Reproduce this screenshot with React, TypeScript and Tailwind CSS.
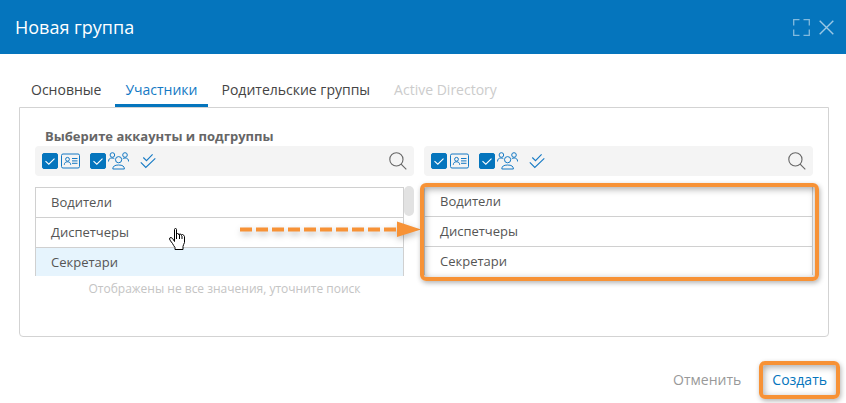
import React, { useState } from "react";

const groups = ["Водители", "Диспетчеры", "Секретари"];

function CheckBox({ label }: { label: string }) {
  const [on, setOn] = useState(true);
  return (
    <span className="relative block h-4 w-4">
      <input
        type="checkbox"
        aria-label={label}
        checked={on}
        onChange={() => setOn(!on)}
        className="block h-4 w-4 appearance-none rounded-xs border border-[#0575bd] bg-white checked:bg-[#0575bd]"
      />
      {on && (
        <svg className="pointer-events-none absolute inset-0" width="16" height="16" viewBox="0 0 16 16" fill="none" stroke="#fff" strokeWidth="1.1">
          <path d="M3.5 8.2 6.8 11.2 12.5 5.6" />
        </svg>
      )}
    </span>
  );
}

function CardIcon() {
  return (
    <svg width="19" height="16" viewBox="0 0 19 16" fill="none" stroke="#1479c4">
      <rect x="0.5" y="1" width="18" height="14" rx="1.5" />
      <circle cx="6.5" cy="6.3" r="1.9" />
      <path d="M3.3 11.8c0-2 1.3-3 3.2-3s3.2 1 3.2 3M11 5.5h5.5M11 7.9h5.5M11 10.3h5.5" />
    </svg>
  );
}

function PeopleIcon() {
  return (
    <svg width="21" height="18" viewBox="0 0 21 18" fill="none" stroke="#1479c4">
      <circle cx="4.4" cy="3" r="2.3" />
      <circle cx="17" cy="3" r="2.3" />
      <circle cx="10.6" cy="7.7" r="3.1" />
      <path d="M.5 9.5c0-2.4 1.3-3.5 3.4-3.5 1 0 1.8.2 2.4.7M20.6 9.5c0-2.4-1.4-3.5-3.4-3.5-1 0-1.8.2-2.4.7" />
      <path d="M4.8 17c0-2.8 2-4 5.8-4s5.800 1.200 5.800 4z" />
    </svg>
  );
}

function DoubleCheckIcon() {
  return (
    <svg width="16" height="16" viewBox="0 0 16 16" fill="none" stroke="#1479c4" strokeWidth="1.1">
      <path d="M3.3 4.5 6.5 7.6 12.6 1.3M.8 9.3 5.8 14.4 15.3 5.3" />
    </svg>
  );
}

function Toolbar() {
  return (
    <div className="flex h-[30px] items-center rounded bg-[#f4f4f4] px-[7px]">
      <CheckBox label="Аккаунты" />
      <span className="ml-[3px]"><CardIcon /></span>
      <span className="ml-2.5"><CheckBox label="Подгруппы" /></span>
      <span className="ml-0.5"><PeopleIcon /></span>
      <button type="button" aria-label="Выбрать все" className="ml-[11px]">
        <DoubleCheckIcon />
      </button>
      <button type="button" aria-label="Поиск" className="ml-auto">
        <svg width="18" height="18" viewBox="0 0 18 18" fill="none" stroke="#666" strokeWidth="1.1">
          <circle cx="7.4" cy="7.4" r="6.6" />
          <path d="M12.1 12.1 17.3 17.3" />
        </svg>
      </button>
    </div>
  );
}

function GroupList({ active }: { active?: string }) {
  return (
    <ul className="h-[89px] flex-1 overflow-hidden border-x border-t border-[#d0d0d0] text-[13px] leading-[29px] text-[#555]">
      {groups.map((name) => (
        <li
          key={name}
          className={"border-b border-[#d0d0d0] px-[15px] " + (name === active ? "bg-[#e6f4fd]" : "bg-white")}
        >
          {name}
        </li>
      ))}
    </ul>
  );
}

function Highlight({ place }: { place: string }) {
  return (
    <div
      className={
        "pointer-events-none absolute rounded-md border-4 border-[#f79236] shadow-[1px_2px_5px_rgba(0,0,0,0.3),inset_1px_2px_7px_rgba(0,0,0,0.35)] " +
        place
      }
    />
  );
}

function DragArrow() {
  return (
    <svg
      className="pointer-events-none absolute top-[34px] -right-[7px] drop-shadow-[1px_3px_3px_rgba(0,0,0,0.25)]"
      width="181"
      height="18"
      viewBox="0 0 181 18"
    >
      <path d="M0 9.5H157" stroke="#f79236" strokeWidth="4" strokeDasharray="12 4" />
      <path d="M157 1.5 181 9.5 157 17z" fill="#f79236" />
    </svg>
  );
}

function HandCursor() {
  return (
    <svg className="pointer-events-none absolute top-[42px] left-[134px]" width="17" height="22" viewBox="0 0 17 22" fill="#fff" stroke="#000">
      <path d="M5.5 13.5V1.5q0-1 1-1t1 1V6.5q0-1 1-1 1.5 0 1.5 1.5 0-1 1-1 1.5 0 1.5 1.5 0-1 1-1 1.5 .5 2 2V14.5q-1 2-1.5 4V21.5H6V19.5q-1.5-2-2.500-4Q1 12.5.5 11q0-1.5 1.5-1.5Q3.5 9.5 5.5 13.5z" />
      <path d="M7.5 6v5M10.5 7v4M13 8v3" fill="none" />
    </svg>
  );
}

const tabs = [
  { name: "Основные", style: "border-transparent text-[#444]" },
  { name: "Участники", style: "border-[#0575bd] text-[#1479c4]" },
  { name: "Родительские группы", style: "border-transparent text-[#444]" },
  { name: "Active Directory", style: "border-transparent text-[#ccc]", disabled: true },
];

export default function App() {
  return (
    <div className="bg-white font-['Open_Sans','Noto_Sans',sans-serif]">
      <header className="flex h-[54px] items-center justify-between bg-[#0575bd] pr-3 pl-[15px]">
        <h1 className="text-lg font-normal text-white">Новая группа</h1>
        <div className="flex items-center gap-[9px]">
          <button type="button" aria-label="Развернуть">
            <svg width="17" height="17" viewBox="0 0 17 17" fill="none" stroke="#82bade" strokeWidth="1.3">
              <path d="M.7 6.5V.7H6.5M10.5.7H16.3V6.5M16.3 10.5V16.3H10.5M6.5 16.3H.7V10.5" />
            </svg>
          </button>
          <button type="button" aria-label="Закрыть">
            <svg width="15" height="15" viewBox="0 0 15 15" fill="none" stroke="#9bc8e5" strokeWidth="1.4">
              <path d="M.7.7 14.3 14.3M14.3.7.7 14.3" />
            </svg>
          </button>
        </div>
      </header>

      <main className="pt-[18px] pr-[17px] pl-[19px]">
        <div role="tablist" className="flex gap-1 pl-0.5">
          {tabs.map((t) => (
            <button
              key={t.name}
              type="button"
              role="tab"
              aria-selected={t.name === "Участники"}
              disabled={t.disabled}
              className={"h-[35px] border-b-3 px-2.5 pt-1 text-sm " + t.style}
            >
              {t.name}
            </button>
          ))}
        </div>

        <section className="rounded-b border border-[#d3d3d3] px-[15px] pt-[18px] pb-[38px]">
          <h2 className="px-2.5 text-[13px] leading-5 font-bold text-[#666]">Выберите аккаунты и подгруппы</h2>
          <div className="grid grid-cols-[379fr_389fr] gap-x-2.5">
            <div>
              <Toolbar />
              <div className="relative mt-2.5 flex items-start">
                <div className="flex flex-1 pt-px">
                  <GroupList active="Секретари" />
                </div>
                <div className="h-[30px] w-2.5 rounded-full bg-[#e2e2e2]" />
                <HandCursor />
                <DragArrow />
              </div>
              <p className="px-2.5 pt-1 text-center text-xs leading-[18px] text-[#c4c4c4]">
                Отображены не все значения, уточните поиск
              </p>
            </div>
            <div>
              <Toolbar />
              <div className="relative mt-2.5 flex">
                <GroupList />
                <Highlight place="-top-[3px] -right-1.5 -bottom-1.5 -left-1" />
              </div>
            </div>
          </div>
        </section>
      </main>

      <footer className="flex items-center justify-end gap-[18px] pt-6 pr-1.5 pb-1 text-sm">
        <button type="button" className="text-[#999]">Отменить</button>
        <div className="relative">
          <button type="button" className="h-[38px] px-[13px] text-[#0575bd]">Создать</button>
          <Highlight place="inset-0" />
        </div>
      </footer>
    </div>
  );
}
